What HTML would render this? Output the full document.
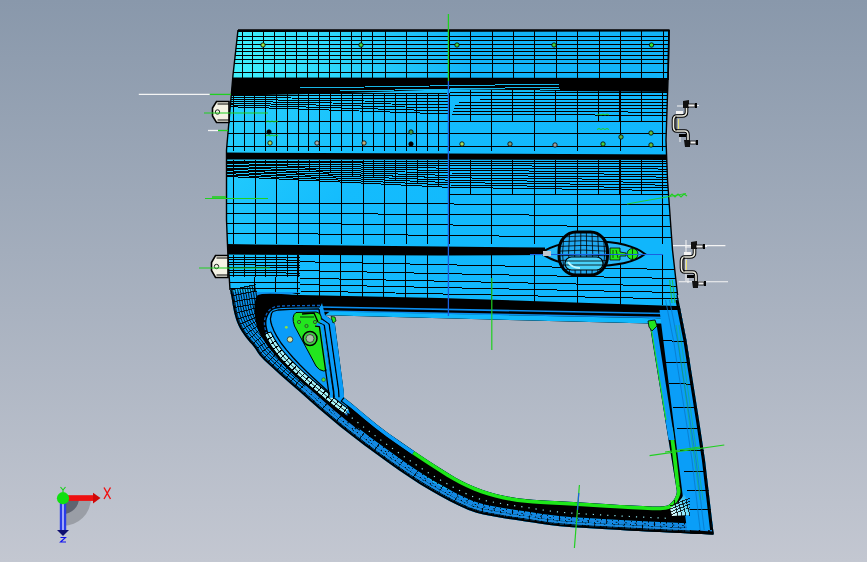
<!DOCTYPE html>
<html><head><meta charset="utf-8"><style>
html,body{margin:0;padding:0;width:867px;height:562px;overflow:hidden;background:#a6afbe}
</style></head><body>
<svg width="867" height="562" viewBox="0 0 867 562" style="display:block">
<defs>
<linearGradient id="bg" x1="0" y1="0" x2="0" y2="562" gradientUnits="userSpaceOnUse">
<stop offset="0" stop-color="#8998ab"/><stop offset="1" stop-color="#c3c7d1"/></linearGradient>
<linearGradient id="door" x1="226" y1="60" x2="520" y2="330" gradientUnits="userSpaceOnUse">
<stop offset="0" stop-color="#2ad4fc"/><stop offset="0.45" stop-color="#14bcfd"/><stop offset="1" stop-color="#10b6fc"/></linearGradient>
<linearGradient id="topp" x1="236" y1="45" x2="470" y2="60" gradientUnits="userSpaceOnUse">
<stop offset="0" stop-color="#40f0fc"/><stop offset="0.45" stop-color="#2cd4fa"/><stop offset="1" stop-color="#12b4f8"/></linearGradient>
<clipPath id="dc"><path d="M238.0,30.0 669.0,30.0 668.0,80.0 666.0,140.0 667.5,180.0 670.0,215.0 672.5,250.0 677.6,295.0 686.4,340.0 699.0,420.0 705.0,460.0 713.5,533.0 713.5,535.0 713.5,534.5 695.9,533.7 670.5,532.5 643.2,531.2 620.0,530.0 602.0,529.0 586.3,528.1 572.4,527.2 560.0,526.2 549.4,525.1 540.7,523.8 533.0,522.6 525.4,521.4 517.9,520.3 510.8,519.3 504.0,518.3 497.0,517.0 490.1,515.7 483.4,514.5 476.4,512.7 468.5,510.0 459.6,506.1 449.9,501.3 439.8,495.8 429.7,490.0 419.6,483.9 409.4,477.3 398.9,470.2 388.0,462.5 376.3,454.0 363.9,444.9 351.6,435.5 340.0,426.4 329.3,417.6 319.2,408.9 309.5,400.4 300.0,392.0 290.1,383.4 280.1,374.7 271.1,366.6 264.0,360.0 259.6,355.3 257.3,352.1 255.8,349.6 254.0,347.0 251.8,344.3 249.6,341.9 247.6,339.5 245.6,337.0 243.7,334.3 241.8,331.4 240.0,328.5 238.5,325.5 237.2,322.5 236.1,319.4 235.1,316.1 234.2,312.7 233.4,308.8 232.6,304.5 232.0,300.4 231.4,297.0 230.9,294.5 230.5,292.5 230.2,291.1 230.0,290.0 228.0,257.0 226.5,220.0 226.5,150.0 233.0,75.0Z M325.0,315.3 333.0,320.5 335.0,324.6 343.6,390.4 344.0,397.6 344.0,397.6 345.1,398.4 346.5,399.6 349.1,401.5 353.4,405.0 359.9,410.4 368.0,417.2 377.5,424.9 388.0,432.9 400.3,441.6 414.4,451.2 428.2,460.4 440.0,468.0 448.8,473.5 455.7,477.7 461.9,481.0 468.5,484.2 475.6,487.3 482.8,489.9 489.9,492.2 497.0,494.2 504.0,495.8 510.8,497.1 517.9,498.2 525.4,499.1 533.0,499.8 540.7,500.3 549.4,500.7 560.0,501.3 573.7,502.1 589.7,503.1 605.8,504.1 620.0,504.9 632.1,505.6 643.1,506.1 652.5,506.5 660.0,506.5 664.9,506.1 667.7,505.4 669.3,504.4 671.0,503.0 672.9,501.1 674.5,498.8 675.7,496.3 676.5,494.0 676.8,491.7 676.6,489.4 676.2,487.4 676.0,486.0 649.5,323.5Z" clip-rule="evenodd"/></clipPath>
</defs>
<rect width="867" height="562" fill="url(#bg)"/>
<path d="M238.0,30.0 669.0,30.0 668.0,80.0 666.0,140.0 667.5,180.0 670.0,215.0 672.5,250.0 677.6,295.0 686.4,340.0 699.0,420.0 705.0,460.0 713.5,533.0 713.5,535.0 713.5,534.5 695.9,533.7 670.5,532.5 643.2,531.2 620.0,530.0 602.0,529.0 586.3,528.1 572.4,527.2 560.0,526.2 549.4,525.1 540.7,523.8 533.0,522.6 525.4,521.4 517.9,520.3 510.8,519.3 504.0,518.3 497.0,517.0 490.1,515.7 483.4,514.5 476.4,512.7 468.5,510.0 459.6,506.1 449.9,501.3 439.8,495.8 429.7,490.0 419.6,483.9 409.4,477.3 398.9,470.2 388.0,462.5 376.3,454.0 363.9,444.9 351.6,435.5 340.0,426.4 329.3,417.6 319.2,408.9 309.5,400.4 300.0,392.0 290.1,383.4 280.1,374.7 271.1,366.6 264.0,360.0 259.6,355.3 257.3,352.1 255.8,349.6 254.0,347.0 251.8,344.3 249.6,341.9 247.6,339.5 245.6,337.0 243.7,334.3 241.8,331.4 240.0,328.5 238.5,325.5 237.2,322.5 236.1,319.4 235.1,316.1 234.2,312.7 233.4,308.8 232.6,304.5 232.0,300.4 231.4,297.0 230.9,294.5 230.5,292.5 230.2,291.1 230.0,290.0 228.0,257.0 226.5,220.0 226.5,150.0 233.0,75.0Z M325.0,315.3 333.0,320.5 335.0,324.6 343.6,390.4 344.0,397.6 344.0,397.6 345.1,398.4 346.5,399.6 349.1,401.5 353.4,405.0 359.9,410.4 368.0,417.2 377.5,424.9 388.0,432.9 400.3,441.6 414.4,451.2 428.2,460.4 440.0,468.0 448.8,473.5 455.7,477.7 461.9,481.0 468.5,484.2 475.6,487.3 482.8,489.9 489.9,492.2 497.0,494.2 504.0,495.8 510.8,497.1 517.9,498.2 525.4,499.1 533.0,499.8 540.7,500.3 549.4,500.7 560.0,501.3 573.7,502.1 589.7,503.1 605.8,504.1 620.0,504.9 632.1,505.6 643.1,506.1 652.5,506.5 660.0,506.5 664.9,506.1 667.7,505.4 669.3,504.4 671.0,503.0 672.9,501.1 674.5,498.8 675.7,496.3 676.5,494.0 676.8,491.7 676.6,489.4 676.2,487.4 676.0,486.0 649.5,323.5Z" fill="url(#door)" fill-rule="evenodd"/>
<g clip-path="url(#dc)">
<polygon points="226.0,25.0 680.0,25.0 680.0,78.0 226.0,78.0" fill="url(#topp)"/><g shape-rendering="crispEdges"><line x1="226.0" y1="36.0" x2="680.0" y2="36.0" stroke="#000" stroke-width="1.0"/><line x1="226.0" y1="40.0" x2="680.0" y2="40.0" stroke="#000" stroke-width="1.0"/><line x1="226.0" y1="44.2" x2="680.0" y2="44.2" stroke="#000" stroke-width="1.0"/><line x1="226.0" y1="48.0" x2="680.0" y2="48.0" stroke="#000" stroke-width="1.0"/><line x1="226.0" y1="51.5" x2="680.0" y2="51.5" stroke="#000" stroke-width="1.0"/><line x1="226.0" y1="55.0" x2="680.0" y2="55.0" stroke="#000" stroke-width="1.0"/><line x1="226.0" y1="59.0" x2="680.0" y2="59.0" stroke="#000" stroke-width="1.0"/><line x1="226.0" y1="63.0" x2="680.0" y2="63.0" stroke="#000" stroke-width="1.0"/><line x1="226.0" y1="72.5" x2="680.0" y2="72.5" stroke="#000" stroke-width="1.0"/><line x1="242.0" y1="30.0" x2="242.0" y2="78.0" stroke="#000" stroke-width="1.0"/><line x1="252.9" y1="30.0" x2="252.9" y2="78.0" stroke="#000" stroke-width="1.0"/><line x1="263.8" y1="30.0" x2="263.8" y2="78.0" stroke="#000" stroke-width="1.0"/><line x1="274.7" y1="30.0" x2="274.7" y2="78.0" stroke="#000" stroke-width="1.0"/><line x1="285.6" y1="30.0" x2="285.6" y2="78.0" stroke="#000" stroke-width="1.0"/><line x1="296.5" y1="30.0" x2="296.5" y2="78.0" stroke="#000" stroke-width="1.0"/><line x1="307.4" y1="30.0" x2="307.4" y2="78.0" stroke="#000" stroke-width="1.0"/><line x1="318.3" y1="30.0" x2="318.3" y2="78.0" stroke="#000" stroke-width="1.0"/><line x1="329.2" y1="30.0" x2="329.2" y2="78.0" stroke="#000" stroke-width="1.0"/><line x1="340.1" y1="30.0" x2="340.1" y2="78.0" stroke="#000" stroke-width="1.0"/><line x1="351.0" y1="30.0" x2="351.0" y2="78.0" stroke="#000" stroke-width="1.0"/><line x1="361.9" y1="30.0" x2="361.9" y2="78.0" stroke="#000" stroke-width="1.0"/><line x1="372.8" y1="30.0" x2="372.8" y2="78.0" stroke="#000" stroke-width="1.0"/><line x1="385.0" y1="30.0" x2="385.0" y2="78.0" stroke="#000" stroke-width="1.0"/><line x1="406.4" y1="30.0" x2="406.4" y2="78.0" stroke="#000" stroke-width="1.0"/><line x1="427.8" y1="30.0" x2="427.8" y2="78.0" stroke="#000" stroke-width="1.0"/><line x1="449.2" y1="30.0" x2="449.2" y2="78.0" stroke="#000" stroke-width="1.0"/><line x1="470.6" y1="30.0" x2="470.6" y2="78.0" stroke="#000" stroke-width="1.0"/><line x1="492.0" y1="30.0" x2="492.0" y2="78.0" stroke="#000" stroke-width="1.0"/><line x1="513.4" y1="30.0" x2="513.4" y2="78.0" stroke="#000" stroke-width="1.0"/><line x1="534.8" y1="30.0" x2="534.8" y2="78.0" stroke="#000" stroke-width="1.0"/><line x1="556.2" y1="30.0" x2="556.2" y2="78.0" stroke="#000" stroke-width="1.0"/><line x1="577.6" y1="30.0" x2="577.6" y2="78.0" stroke="#000" stroke-width="1.0"/><line x1="599.0" y1="30.0" x2="599.0" y2="78.0" stroke="#000" stroke-width="1.0"/><line x1="620.4" y1="30.0" x2="620.4" y2="78.0" stroke="#000" stroke-width="1.0"/><line x1="641.8" y1="30.0" x2="641.8" y2="78.0" stroke="#000" stroke-width="1.0"/><line x1="663.2" y1="30.0" x2="663.2" y2="78.0" stroke="#000" stroke-width="1.0"/></g><polyline points="226.0,31.0 669.0,30.5" fill="none" stroke="#000" stroke-width="2.2" stroke-linejoin="round" /><polygon points="220.0,77.5 680.0,78.0 680.0,92.0 560.0,91.0 450.0,89.0 350.0,93.0 220.0,96.0" fill="#000"/><g shape-rendering="crispEdges"><line x1="300.0" y1="88.0" x2="560.0" y2="84.0" stroke="#18b8e8" stroke-width="1.0"/><line x1="340.0" y1="91.0" x2="560.0" y2="87.0" stroke="#18b8e8" stroke-width="1.0"/><line x1="380.0" y1="94.0" x2="560.0" y2="89.5" stroke="#18b8e8" stroke-width="1.0"/></g><polyline points="226,94.0 450,93.0 680,92.5" fill="none" stroke="#000" stroke-width="1" shape-rendering="crispEdges"/><polyline points="226,95.8 450,96.0 680,95.8" fill="none" stroke="#000" stroke-width="1" shape-rendering="crispEdges"/><polyline points="226,97.6 450,99.0 680,99.1" fill="none" stroke="#000" stroke-width="1" shape-rendering="crispEdges"/><polyline points="226,99.4 450,102.0 680,102.4" fill="none" stroke="#000" stroke-width="1" shape-rendering="crispEdges"/><polyline points="226,101.2 450,105.0 680,105.7" fill="none" stroke="#000" stroke-width="1" shape-rendering="crispEdges"/><polyline points="226,103.0 450,108.0 680,109.0" fill="none" stroke="#000" stroke-width="1" shape-rendering="crispEdges"/><polyline points="226,104.8 450,111.0 680,112.3" fill="none" stroke="#000" stroke-width="1" shape-rendering="crispEdges"/><polyline points="226,106.6 450,114.0 680,115.6" fill="none" stroke="#000" stroke-width="1" shape-rendering="crispEdges"/><polygon points="220.0,152.5 680.0,154.5 680.0,160.0 220.0,159.5" fill="#000"/><g shape-rendering="crispEdges"><line x1="226.0" y1="121.0" x2="680.0" y2="121.0" stroke="#000" stroke-width="1.0"/><line x1="226.0" y1="133.0" x2="680.0" y2="133.0" stroke="#000" stroke-width="1.0"/><line x1="226.0" y1="146.0" x2="680.0" y2="146.0" stroke="#000" stroke-width="1.0"/><line x1="233.3" y1="93.0" x2="233.3" y2="151.0" stroke="#000" stroke-width="1.0"/><line x1="244.1" y1="93.0" x2="244.1" y2="151.0" stroke="#000" stroke-width="1.0"/><line x1="254.9" y1="93.0" x2="254.9" y2="151.0" stroke="#000" stroke-width="1.0"/><line x1="265.7" y1="93.0" x2="265.7" y2="151.0" stroke="#000" stroke-width="1.0"/><line x1="276.5" y1="93.0" x2="276.5" y2="151.0" stroke="#000" stroke-width="1.0"/><line x1="287.3" y1="93.0" x2="287.3" y2="151.0" stroke="#000" stroke-width="1.0"/><line x1="298.1" y1="93.0" x2="298.1" y2="151.0" stroke="#000" stroke-width="1.0"/><line x1="308.9" y1="93.0" x2="308.9" y2="151.0" stroke="#000" stroke-width="1.0"/><line x1="319.7" y1="93.0" x2="319.7" y2="151.0" stroke="#000" stroke-width="1.0"/><line x1="330.5" y1="93.0" x2="330.5" y2="151.0" stroke="#000" stroke-width="1.0"/><line x1="341.3" y1="93.0" x2="341.3" y2="151.0" stroke="#000" stroke-width="1.0"/><line x1="352.1" y1="93.0" x2="352.1" y2="151.0" stroke="#000" stroke-width="1.0"/><line x1="362.9" y1="93.0" x2="362.9" y2="151.0" stroke="#000" stroke-width="1.0"/><line x1="373.7" y1="93.0" x2="373.7" y2="151.0" stroke="#000" stroke-width="1.0"/><line x1="384.5" y1="93.0" x2="384.5" y2="151.0" stroke="#000" stroke-width="1.0"/><line x1="395.3" y1="93.0" x2="395.3" y2="151.0" stroke="#000" stroke-width="1.0"/><line x1="406.1" y1="93.0" x2="406.1" y2="151.0" stroke="#000" stroke-width="1.0"/><line x1="416.9" y1="93.0" x2="416.9" y2="151.0" stroke="#000" stroke-width="1.0"/><line x1="427.7" y1="93.0" x2="427.7" y2="151.0" stroke="#000" stroke-width="1.0"/><line x1="438.5" y1="93.0" x2="438.5" y2="151.0" stroke="#000" stroke-width="1.0"/><line x1="449.3" y1="93.0" x2="449.3" y2="151.0" stroke="#000" stroke-width="1.0"/><line x1="470.0" y1="90.0" x2="470.0" y2="121.0" stroke="#000" stroke-width="1.0"/><line x1="491.4" y1="90.0" x2="491.4" y2="121.0" stroke="#000" stroke-width="1.0"/><line x1="512.8" y1="90.0" x2="512.8" y2="121.0" stroke="#000" stroke-width="1.0"/><line x1="534.2" y1="90.0" x2="534.2" y2="121.0" stroke="#000" stroke-width="1.0"/><line x1="555.6" y1="90.0" x2="555.6" y2="121.0" stroke="#000" stroke-width="1.0"/><line x1="577.0" y1="90.0" x2="577.0" y2="121.0" stroke="#000" stroke-width="1.0"/><line x1="598.4" y1="90.0" x2="598.4" y2="121.0" stroke="#000" stroke-width="1.0"/><line x1="619.8" y1="90.0" x2="619.8" y2="121.0" stroke="#000" stroke-width="1.0"/><line x1="641.2" y1="90.0" x2="641.2" y2="121.0" stroke="#000" stroke-width="1.0"/><line x1="662.6" y1="90.0" x2="662.6" y2="121.0" stroke="#000" stroke-width="1.0"/><line x1="491.7" y1="90.0" x2="491.7" y2="151.0" stroke="#000" stroke-width="1.0"/><line x1="534.5" y1="90.0" x2="534.5" y2="151.0" stroke="#000" stroke-width="1.0"/><line x1="577.3" y1="90.0" x2="577.3" y2="151.0" stroke="#000" stroke-width="1.0"/><line x1="620.1" y1="90.0" x2="620.1" y2="151.0" stroke="#000" stroke-width="1.0"/><line x1="662.9" y1="90.0" x2="662.9" y2="151.0" stroke="#000" stroke-width="1.0"/></g><polyline points="226,161.0 450,161.0 680,161.0" fill="none" stroke="#000" stroke-width="1" shape-rendering="crispEdges"/><polyline points="226,162.4 450,163.4 680,163.7" fill="none" stroke="#000" stroke-width="1" shape-rendering="crispEdges"/><polyline points="226,163.8 450,165.8 680,166.4" fill="none" stroke="#000" stroke-width="1" shape-rendering="crispEdges"/><polyline points="226,165.2 450,168.2 680,169.1" fill="none" stroke="#000" stroke-width="1" shape-rendering="crispEdges"/><polyline points="226,166.6 450,170.6 680,171.8" fill="none" stroke="#000" stroke-width="1" shape-rendering="crispEdges"/><polyline points="226,168.0 450,173.0 680,174.5" fill="none" stroke="#000" stroke-width="1" shape-rendering="crispEdges"/><polyline points="226,169.4 450,175.4 680,177.2" fill="none" stroke="#000" stroke-width="1" shape-rendering="crispEdges"/><polyline points="226,170.8 450,177.8 680,179.9" fill="none" stroke="#000" stroke-width="1" shape-rendering="crispEdges"/><polyline points="226,172.2 450,180.2 680,182.6" fill="none" stroke="#000" stroke-width="1" shape-rendering="crispEdges"/><polyline points="226,173.6 450,182.6 680,185.3" fill="none" stroke="#000" stroke-width="1" shape-rendering="crispEdges"/><polyline points="226,175.0 450,185.0 680,188.0" fill="none" stroke="#000" stroke-width="1" shape-rendering="crispEdges"/><polyline points="226,176.4 450,187.4 680,190.7" fill="none" stroke="#000" stroke-width="1" shape-rendering="crispEdges"/><polygon points="220.0,244.0 440.0,246.5 545.0,247.5 545.0,255.0 440.0,255.5 220.0,254.5" fill="#000"/><g shape-rendering="crispEdges"><line x1="450.0" y1="194.0" x2="680.0" y2="194.0" stroke="#000" stroke-width="1.0"/><line x1="226.0" y1="203.0" x2="680.0" y2="205.0" stroke="#000" stroke-width="1.0"/><line x1="226.0" y1="213.0" x2="680.0" y2="216.0" stroke="#000" stroke-width="1.0"/><line x1="226.0" y1="223.0" x2="680.0" y2="227.0" stroke="#000" stroke-width="1.0"/><line x1="226.0" y1="233.0" x2="680.0" y2="238.0" stroke="#000" stroke-width="1.0"/><line x1="233.4" y1="160.0" x2="233.4" y2="161.9" stroke="#000" stroke-width="1.0"/><line x1="244.2" y1="160.0" x2="244.2" y2="163.1" stroke="#000" stroke-width="1.0"/><line x1="255.0" y1="160.0" x2="255.0" y2="164.4" stroke="#000" stroke-width="1.0"/><line x1="265.8" y1="160.0" x2="265.8" y2="165.6" stroke="#000" stroke-width="1.0"/><line x1="276.6" y1="160.0" x2="276.6" y2="166.9" stroke="#000" stroke-width="1.0"/><line x1="287.4" y1="160.0" x2="287.4" y2="168.1" stroke="#000" stroke-width="1.0"/><line x1="298.2" y1="160.0" x2="298.2" y2="169.4" stroke="#000" stroke-width="1.0"/><line x1="309.0" y1="160.0" x2="309.0" y2="170.6" stroke="#000" stroke-width="1.0"/><line x1="319.8" y1="160.0" x2="319.8" y2="171.9" stroke="#000" stroke-width="1.0"/><line x1="330.6" y1="160.0" x2="330.6" y2="173.1" stroke="#000" stroke-width="1.0"/><line x1="341.4" y1="160.0" x2="341.4" y2="174.4" stroke="#000" stroke-width="1.0"/><line x1="352.2" y1="160.0" x2="352.2" y2="175.6" stroke="#000" stroke-width="1.0"/><line x1="363.0" y1="160.0" x2="363.0" y2="176.9" stroke="#000" stroke-width="1.0"/><line x1="373.8" y1="160.0" x2="373.8" y2="178.2" stroke="#000" stroke-width="1.0"/><line x1="384.6" y1="160.0" x2="384.6" y2="179.4" stroke="#000" stroke-width="1.0"/><line x1="395.4" y1="160.0" x2="395.4" y2="180.7" stroke="#000" stroke-width="1.0"/><line x1="406.2" y1="160.0" x2="406.2" y2="181.9" stroke="#000" stroke-width="1.0"/><line x1="417.0" y1="160.0" x2="417.0" y2="183.2" stroke="#000" stroke-width="1.0"/><line x1="427.8" y1="160.0" x2="427.8" y2="184.4" stroke="#000" stroke-width="1.0"/><line x1="438.6" y1="160.0" x2="438.6" y2="185.7" stroke="#000" stroke-width="1.0"/><line x1="449.4" y1="160.0" x2="449.4" y2="186.9" stroke="#000" stroke-width="1.0"/><line x1="233.4" y1="160.0" x2="233.4" y2="244.0" stroke="#000" stroke-width="1.0"/><line x1="255.0" y1="160.0" x2="255.0" y2="244.0" stroke="#000" stroke-width="1.0"/><line x1="276.6" y1="160.0" x2="276.6" y2="244.0" stroke="#000" stroke-width="1.0"/><line x1="298.2" y1="160.0" x2="298.2" y2="244.0" stroke="#000" stroke-width="1.0"/><line x1="319.8" y1="160.0" x2="319.8" y2="244.0" stroke="#000" stroke-width="1.0"/><line x1="341.4" y1="160.0" x2="341.4" y2="244.0" stroke="#000" stroke-width="1.0"/><line x1="363.0" y1="160.0" x2="363.0" y2="244.0" stroke="#000" stroke-width="1.0"/><line x1="384.6" y1="160.0" x2="384.6" y2="244.0" stroke="#000" stroke-width="1.0"/><line x1="406.2" y1="160.0" x2="406.2" y2="244.0" stroke="#000" stroke-width="1.0"/><line x1="427.8" y1="160.0" x2="427.8" y2="244.0" stroke="#000" stroke-width="1.0"/><line x1="449.4" y1="160.0" x2="449.4" y2="244.0" stroke="#000" stroke-width="1.0"/><line x1="470.0" y1="160.0" x2="470.0" y2="195.0" stroke="#000" stroke-width="1.0"/><line x1="491.4" y1="160.0" x2="491.4" y2="195.0" stroke="#000" stroke-width="1.0"/><line x1="512.8" y1="160.0" x2="512.8" y2="195.0" stroke="#000" stroke-width="1.0"/><line x1="534.2" y1="160.0" x2="534.2" y2="195.0" stroke="#000" stroke-width="1.0"/><line x1="555.6" y1="160.0" x2="555.6" y2="195.0" stroke="#000" stroke-width="1.0"/><line x1="577.0" y1="160.0" x2="577.0" y2="195.0" stroke="#000" stroke-width="1.0"/><line x1="598.4" y1="160.0" x2="598.4" y2="195.0" stroke="#000" stroke-width="1.0"/><line x1="619.8" y1="160.0" x2="619.8" y2="195.0" stroke="#000" stroke-width="1.0"/><line x1="641.2" y1="160.0" x2="641.2" y2="195.0" stroke="#000" stroke-width="1.0"/><line x1="662.6" y1="160.0" x2="662.6" y2="195.0" stroke="#000" stroke-width="1.0"/><line x1="491.7" y1="160.0" x2="491.7" y2="244.0" stroke="#000" stroke-width="1.0"/><line x1="534.5" y1="160.0" x2="534.5" y2="244.0" stroke="#000" stroke-width="1.0"/><line x1="577.3" y1="160.0" x2="577.3" y2="244.0" stroke="#000" stroke-width="1.0"/><line x1="620.1" y1="160.0" x2="620.1" y2="244.0" stroke="#000" stroke-width="1.0"/><line x1="662.9" y1="160.0" x2="662.9" y2="244.0" stroke="#000" stroke-width="1.0"/><line x1="226.0" y1="257.0" x2="300.0" y2="257.5" stroke="#000" stroke-width="1.0"/><line x1="226.0" y1="259.6" x2="300.0" y2="260.1" stroke="#000" stroke-width="1.0"/><line x1="226.0" y1="262.2" x2="300.0" y2="262.7" stroke="#000" stroke-width="1.0"/><line x1="226.0" y1="264.8" x2="300.0" y2="265.3" stroke="#000" stroke-width="1.0"/><line x1="226.0" y1="267.4" x2="300.0" y2="267.9" stroke="#000" stroke-width="1.0"/><line x1="226.0" y1="270.0" x2="300.0" y2="270.5" stroke="#000" stroke-width="1.0"/><line x1="226.0" y1="272.6" x2="300.0" y2="273.1" stroke="#000" stroke-width="1.0"/><line x1="226.0" y1="275.2" x2="300.0" y2="275.7" stroke="#000" stroke-width="1.0"/><line x1="233.4" y1="255.0" x2="233.4" y2="277.0" stroke="#000" stroke-width="1.0"/><line x1="244.2" y1="255.0" x2="244.2" y2="277.0" stroke="#000" stroke-width="1.0"/><line x1="255.0" y1="255.0" x2="255.0" y2="277.0" stroke="#000" stroke-width="1.0"/><line x1="265.8" y1="255.0" x2="265.8" y2="277.0" stroke="#000" stroke-width="1.0"/><line x1="276.6" y1="255.0" x2="276.6" y2="277.0" stroke="#000" stroke-width="1.0"/><line x1="287.4" y1="255.0" x2="287.4" y2="277.0" stroke="#000" stroke-width="1.0"/><line x1="298.2" y1="255.0" x2="298.2" y2="277.0" stroke="#000" stroke-width="1.0"/><line x1="226.0" y1="282.0" x2="300.0" y2="282.0" stroke="#000" stroke-width="1.0"/><line x1="226.0" y1="288.0" x2="300.0" y2="288.0" stroke="#000" stroke-width="1.0"/><line x1="226.0" y1="293.0" x2="300.0" y2="293.0" stroke="#000" stroke-width="1.0"/><line x1="254.8" y1="277.0" x2="254.8" y2="300.0" stroke="#000" stroke-width="1.0"/><line x1="275.5" y1="277.0" x2="275.5" y2="300.0" stroke="#000" stroke-width="1.0"/><line x1="300.0" y1="261.7" x2="680.0" y2="269.7" stroke="#000" stroke-width="1.0"/><line x1="300.0" y1="270.6" x2="680.0" y2="278.6" stroke="#000" stroke-width="1.0"/><line x1="300.0" y1="278.2" x2="680.0" y2="286.2" stroke="#000" stroke-width="1.0"/><line x1="300.0" y1="284.6" x2="680.0" y2="292.6" stroke="#000" stroke-width="1.0"/><line x1="300.0" y1="291.0" x2="680.0" y2="299.0" stroke="#000" stroke-width="1.0"/><line x1="297.4" y1="255.0" x2="297.4" y2="300.0" stroke="#000" stroke-width="1.0"/><line x1="319.0" y1="255.0" x2="319.0" y2="300.0" stroke="#000" stroke-width="1.0"/><line x1="340.6" y1="255.0" x2="340.6" y2="300.0" stroke="#000" stroke-width="1.0"/><line x1="362.2" y1="255.0" x2="362.2" y2="300.0" stroke="#000" stroke-width="1.0"/><line x1="383.8" y1="255.0" x2="383.8" y2="300.0" stroke="#000" stroke-width="1.0"/><line x1="405.4" y1="255.0" x2="405.4" y2="300.0" stroke="#000" stroke-width="1.0"/><line x1="427.0" y1="255.0" x2="427.0" y2="300.0" stroke="#000" stroke-width="1.0"/><line x1="448.6" y1="255.0" x2="448.6" y2="300.0" stroke="#000" stroke-width="1.0"/><line x1="491.7" y1="255.0" x2="491.7" y2="305.0" stroke="#000" stroke-width="1.0"/><line x1="534.5" y1="255.0" x2="534.5" y2="305.0" stroke="#000" stroke-width="1.0"/><line x1="577.3" y1="255.0" x2="577.3" y2="305.0" stroke="#000" stroke-width="1.0"/><line x1="620.1" y1="255.0" x2="620.1" y2="305.0" stroke="#000" stroke-width="1.0"/><line x1="662.9" y1="255.0" x2="662.9" y2="305.0" stroke="#000" stroke-width="1.0"/></g><polygon points="226.0,292.0 300.0,292.0 268.0,300.0 262.0,310.0 262.0,330.0 280.0,355.0 340.0,410.0 440.0,488.0 560.0,515.0 713.0,520.0 714.0,540.0 200.0,560.0" fill="#0a94f0"/><polyline points="232.4,289.5 232.7,290.5 233.0,292.0 233.4,294.0 233.9,296.6 234.4,300.0 235.1,304.1 235.8,308.3 236.6,312.1 237.5,315.5 238.5,318.6 239.5,321.5 240.8,324.4 242.2,327.3 243.9,330.1 245.7,332.9 247.6,335.5 249.5,338.0 251.5,340.3 253.7,342.7 256.0,345.5 257.9,348.2 259.4,350.7 261.5,353.7 265.8,358.2 272.8,364.8 281.8,372.8 291.8,381.5 301.6,390.1 311.2,398.5 320.9,407.1 331.0,415.7 341.6,424.5 353.1,433.5 365.4,442.9 377.7,452.0 389.4,460.5 400.4,468.1 410.8,475.2 421.0,481.7 431.0,487.8 441.1,493.6 451.1,499.1 460.7,503.8 469.4,507.7 477.1,510.3 483.9,512.0 490.6,513.3 497.5,514.5 504.4,515.8 511.2,516.9 518.2,517.9 525.8,518.9 533.4,520.1 541.1,521.4 549.7,522.6 560.2,523.7 572.6,524.7 586.5,525.6 602.2,526.5 620.1,527.5 643.3,528.7 670.6,530.0 696.0,531.2 713.6,532.0" fill="none" stroke="#000" stroke-width="0.9" stroke-linejoin="round" /><polyline points="234.9,289.0 235.1,290.0 235.4,291.5 235.8,293.5 236.3,296.1 236.9,299.6 237.6,303.7 238.3,307.8 239.1,311.5 239.9,314.8 240.8,317.8 241.8,320.6 243.0,323.4 244.4,326.1 246.0,328.8 247.8,331.4 249.6,334.0 251.4,336.4 253.4,338.6 255.5,341.1 258.0,344.0 260.0,346.9 261.4,349.3 263.4,352.1 267.5,356.4 274.4,362.9 283.4,370.9 293.4,379.6 303.3,388.2 312.8,396.6 322.5,405.2 332.6,413.8 343.1,422.5 354.6,431.6 366.9,440.9 379.2,450.0 390.9,458.4 401.8,466.0 412.2,473.1 422.3,479.6 432.2,485.7 442.3,491.5 452.2,496.8 461.7,501.6 470.3,505.4 477.8,507.9 484.5,509.6 491.0,510.8 497.9,512.1 504.8,513.3 511.6,514.4 518.6,515.4 526.1,516.5 533.8,517.7 541.5,518.9 550.0,520.1 560.5,521.2 572.8,522.2 586.6,523.1 602.3,524.0 620.3,525.0 643.5,526.2 670.7,527.5 696.1,528.7 713.7,529.5" fill="none" stroke="#000" stroke-width="0.9" stroke-linejoin="round" /><polyline points="237.3,288.5 237.6,289.5 237.9,291.0 238.3,293.0 238.8,295.7 239.4,299.2 240.0,303.3 240.7,307.4 241.5,311.0 242.3,314.1 243.2,317.0 244.2,319.7 245.3,322.3 246.6,324.9 248.1,327.4 249.9,330.0 251.6,332.5 253.4,334.8 255.3,337.0 257.4,339.4 260.0,342.5 262.1,345.6 263.5,347.9 265.3,350.5 269.3,354.7 276.1,361.1 285.1,369.0 295.0,377.7 304.9,386.4 314.5,394.8 324.2,403.3 334.2,411.9 344.7,420.6 356.2,429.6 368.4,438.9 380.7,448.0 392.3,456.4 403.2,464.0 413.6,471.0 423.6,477.5 433.5,483.5 443.5,489.3 453.4,494.6 462.8,499.3 471.3,503.0 478.5,505.5 485.0,507.1 491.5,508.4 498.4,509.6 505.2,510.9 511.9,511.9 518.9,512.9 526.5,514.0 534.2,515.2 541.8,516.4 550.3,517.6 560.7,518.7 573.0,519.7 586.8,520.6 602.5,521.5 620.4,522.5 643.6,523.7 670.9,525.0 696.3,526.2 713.9,527.0" fill="none" stroke="#000" stroke-width="0.9" stroke-linejoin="round" /><polyline points="239.8,288.0 240.0,289.0 240.3,290.5 240.7,292.6 241.2,295.3 241.8,298.8 242.5,302.8 243.2,306.9 243.9,310.4 244.7,313.4 245.6,316.2 246.5,318.8 247.5,321.2 248.8,323.6 250.3,326.1 251.9,328.6 253.6,331.1 255.3,333.2 257.1,335.3 259.3,337.8 261.9,340.9 264.2,344.2 265.6,346.6 267.2,348.8 271.0,352.9 277.8,359.2 286.7,367.2 296.7,375.9 306.6,384.5" fill="none" stroke="#000" stroke-width="0.9" stroke-linejoin="round" /><polyline points="242.2,287.5 242.5,288.5 242.8,290.0 243.2,292.1 243.7,294.8 244.3,298.4 244.9,302.4 245.6,306.4 246.4,309.8 247.1,312.7 248.0,315.4 248.8,317.9 249.8,320.2 251.0,322.4 252.4,324.8 254.0,327.2 255.6,329.6 257.2,331.6 259.0,333.7 261.2,336.2 263.9,339.4 266.3,342.9 267.7,345.2 269.1,347.2 272.8,351.1 279.5,357.4 288.4,365.3 298.3,374.0 308.2,382.6" fill="none" stroke="#000" stroke-width="0.9" stroke-linejoin="round" /><polyline points="244.7,287.0 244.9,288.0 245.2,289.5 245.6,291.6 246.2,294.4 246.8,298.0 247.4,302.0 248.1,305.9 248.8,309.2 249.5,312.1 250.3,314.7 251.1,317.0 252.1,319.1 253.2,321.2 254.5,323.4 256.1,325.8 257.7,328.1 259.2,330.0 260.9,332.0 263.1,334.5 265.9,337.9 268.4,341.5 269.7,343.8 271.0,345.6 274.5,349.3 281.2,355.5 290.0,363.4 300.0,372.1 309.9,380.7" fill="none" stroke="#000" stroke-width="0.9" stroke-linejoin="round" /><polyline points="247.1,286.4 247.4,287.5 247.7,289.0 248.1,291.1 248.6,293.9 249.2,297.6 249.9,301.6 250.5,305.5 251.2,308.7 251.9,311.4 252.7,313.9 253.5,316.0 254.3,318.0 255.3,320.0 256.6,322.1 258.1,324.4 259.7,326.6 261.1,328.4 262.8,330.4 265.0,332.9 267.9,336.4 270.5,340.2 271.8,342.4 272.9,344.0 276.3,347.5 282.9,353.7 291.7,361.5 301.6,370.2 311.5,378.8" fill="none" stroke="#000" stroke-width="0.9" stroke-linejoin="round" /><polyline points="249.6,285.9 249.8,287.0 250.1,288.5 250.5,290.6 251.1,293.5 251.7,297.2 252.3,301.2 253.0,305.0 253.7,308.1 254.4,310.7 255.1,313.1 255.8,315.1 256.6,317.0 257.5,318.8 258.7,320.8 260.2,323.0 261.7,325.1 263.0,326.9 264.7,328.7 266.9,331.3 269.9,334.9 272.6,338.8 273.9,341.0 274.8,342.4 278.0,345.7 284.5,351.8 293.4,359.7 303.3,368.3 313.1,376.9" fill="none" stroke="#000" stroke-width="0.9" stroke-linejoin="round" /><polyline points="252.0,285.4 252.2,286.5 252.6,288.0 253.0,290.2 253.6,293.1 254.2,296.8 254.8,300.8 255.5,304.5 256.1,307.5 256.8,310.0 257.4,312.3 258.1,314.2 258.8,315.9 259.7,317.6 260.8,319.5 262.3,321.6 263.7,323.6 265.0,325.3 266.6,327.1 268.8,329.7 271.9,333.4 274.7,337.5 276.0,339.6 276.7,340.7 279.8,344.0 286.2,350.0 295.0,357.8 304.9,366.4 314.8,375.0" fill="none" stroke="#000" stroke-width="0.9" stroke-linejoin="round" /><polyline points="254.5,284.9 254.7,286.0 255.0,287.5 255.5,289.7 256.0,292.6 256.6,296.4 257.3,300.4 257.9,304.0 258.5,306.9 259.2,309.3 259.8,311.5 260.5,313.3 261.1,314.8 261.9,316.4 263.0,318.1 264.3,320.2 265.7,322.1 266.9,323.7 268.4,325.5 270.7,328.0 273.9,331.8 276.8,336.1 278.0,338.2 278.6,339.1 281.5,342.2 287.9,348.1 296.7,355.9 306.5,364.5 316.4,373.1" fill="none" stroke="#000" stroke-width="0.9" stroke-linejoin="round" /><g shape-rendering="crispEdges"><line x1="231.0" y1="289.8" x2="255.5" y2="284.7" stroke="#000" stroke-width="0.9"/><line x1="232.2" y1="295.7" x2="256.7" y2="291.0" stroke="#000" stroke-width="0.9"/><line x1="233.2" y1="301.6" x2="257.9" y2="297.7" stroke="#000" stroke-width="0.9"/><line x1="234.2" y1="307.5" x2="258.8" y2="303.3" stroke="#000" stroke-width="0.9"/><line x1="235.4" y1="313.3" x2="259.6" y2="307.0" stroke="#000" stroke-width="0.9"/><line x1="237.0" y1="319.1" x2="261.0" y2="311.8" stroke="#000" stroke-width="0.9"/><line x1="239.2" y1="324.5" x2="262.1" y2="314.7" stroke="#000" stroke-width="0.9"/><line x1="241.9" y1="329.7" x2="263.4" y2="316.9" stroke="#000" stroke-width="0.9"/><line x1="245.2" y1="334.7" x2="265.6" y2="320.3" stroke="#000" stroke-width="0.9"/><line x1="248.7" y1="339.4" x2="267.7" y2="323.0" stroke="#000" stroke-width="0.9"/><line x1="252.7" y1="343.9" x2="271.9" y2="327.8" stroke="#000" stroke-width="0.9"/><line x1="256.4" y1="348.7" x2="277.0" y2="334.6" stroke="#000" stroke-width="0.9"/><line x1="259.7" y1="353.7" x2="279.8" y2="338.9" stroke="#000" stroke-width="0.9"/><line x1="263.6" y1="358.1" x2="281.8" y2="341.0" stroke="#000" stroke-width="0.9"/><line x1="267.8" y1="362.2" x2="284.9" y2="343.9" stroke="#000" stroke-width="0.9"/><line x1="272.2" y1="366.3" x2="288.9" y2="347.6" stroke="#000" stroke-width="0.9"/><line x1="276.7" y1="370.3" x2="293.3" y2="351.6" stroke="#000" stroke-width="0.9"/><line x1="281.2" y1="374.3" x2="297.6" y2="355.4" stroke="#000" stroke-width="0.9"/><line x1="285.7" y1="378.2" x2="302.2" y2="359.4" stroke="#000" stroke-width="0.9"/><line x1="290.2" y1="382.2" x2="296.1" y2="375.4" stroke="#000" stroke-width="0.9"/><line x1="294.7" y1="386.1" x2="300.7" y2="379.3" stroke="#000" stroke-width="0.9"/><line x1="299.3" y1="390.0" x2="305.2" y2="383.3" stroke="#000" stroke-width="0.9"/><line x1="303.8" y1="394.0" x2="309.7" y2="387.2" stroke="#000" stroke-width="0.9"/><line x1="308.3" y1="398.0" x2="314.2" y2="391.2" stroke="#000" stroke-width="0.9"/><line x1="312.8" y1="401.9" x2="318.7" y2="395.2" stroke="#000" stroke-width="0.9"/><line x1="317.3" y1="405.9" x2="323.2" y2="399.1" stroke="#000" stroke-width="0.9"/><line x1="321.8" y1="409.8" x2="327.7" y2="403.0" stroke="#000" stroke-width="0.9"/><line x1="326.4" y1="413.7" x2="332.2" y2="406.9" stroke="#000" stroke-width="0.9"/><line x1="330.9" y1="417.6" x2="336.6" y2="410.7" stroke="#000" stroke-width="0.9"/><line x1="335.5" y1="421.4" x2="341.3" y2="414.5" stroke="#000" stroke-width="0.9"/><line x1="340.2" y1="425.2" x2="345.9" y2="418.3" stroke="#000" stroke-width="0.9"/><line x1="344.9" y1="428.9" x2="350.4" y2="421.9" stroke="#000" stroke-width="0.9"/><line x1="349.6" y1="432.7" x2="355.1" y2="425.6" stroke="#000" stroke-width="0.9"/><line x1="354.3" y1="436.3" x2="359.8" y2="429.2" stroke="#000" stroke-width="0.9"/><line x1="359.1" y1="440.0" x2="364.5" y2="432.8" stroke="#000" stroke-width="0.9"/><line x1="363.9" y1="443.6" x2="369.3" y2="436.4" stroke="#000" stroke-width="0.9"/><line x1="368.7" y1="447.2" x2="374.0" y2="439.9" stroke="#000" stroke-width="0.9"/><line x1="373.5" y1="450.7" x2="378.8" y2="443.5" stroke="#000" stroke-width="0.9"/><line x1="378.3" y1="454.3" x2="383.6" y2="447.0" stroke="#000" stroke-width="0.9"/><line x1="383.2" y1="457.8" x2="388.4" y2="450.5" stroke="#000" stroke-width="0.9"/><line x1="388.0" y1="461.3" x2="393.3" y2="454.0" stroke="#000" stroke-width="0.9"/><line x1="392.9" y1="464.7" x2="398.1" y2="457.4" stroke="#000" stroke-width="0.9"/><line x1="397.9" y1="468.2" x2="403.0" y2="460.8" stroke="#000" stroke-width="0.9"/><line x1="402.8" y1="471.6" x2="407.8" y2="464.1" stroke="#000" stroke-width="0.9"/><line x1="407.8" y1="474.9" x2="412.8" y2="467.5" stroke="#000" stroke-width="0.9"/><line x1="412.8" y1="478.2" x2="417.6" y2="470.7" stroke="#000" stroke-width="0.9"/><line x1="417.8" y1="481.5" x2="422.7" y2="473.9" stroke="#000" stroke-width="0.9"/><line x1="422.8" y1="484.6" x2="427.5" y2="477.0" stroke="#000" stroke-width="0.9"/><line x1="428.0" y1="487.8" x2="432.7" y2="480.1" stroke="#000" stroke-width="0.9"/><line x1="433.1" y1="490.8" x2="437.6" y2="483.0" stroke="#000" stroke-width="0.9"/><line x1="438.3" y1="493.8" x2="442.8" y2="486.0" stroke="#000" stroke-width="0.9"/><line x1="443.5" y1="496.7" x2="447.8" y2="488.8" stroke="#000" stroke-width="0.9"/><line x1="448.8" y1="499.5" x2="453.1" y2="491.6" stroke="#000" stroke-width="0.9"/><line x1="454.1" y1="502.3" x2="458.1" y2="494.2" stroke="#000" stroke-width="0.9"/><line x1="459.5" y1="504.9" x2="463.5" y2="496.9" stroke="#000" stroke-width="0.9"/><line x1="464.9" y1="507.3" x2="468.6" y2="499.1" stroke="#000" stroke-width="0.9"/><line x1="470.4" y1="509.6" x2="473.4" y2="501.1" stroke="#000" stroke-width="0.9"/><line x1="476.1" y1="511.6" x2="479.0" y2="503.1" stroke="#000" stroke-width="0.9"/><line x1="481.8" y1="513.0" x2="484.0" y2="504.3" stroke="#000" stroke-width="0.9"/><line x1="487.6" y1="514.2" x2="489.3" y2="505.4" stroke="#000" stroke-width="0.9"/><line x1="493.5" y1="515.3" x2="495.1" y2="506.5" stroke="#000" stroke-width="0.9"/><line x1="499.4" y1="516.4" x2="501.0" y2="507.6" stroke="#000" stroke-width="0.9"/><line x1="505.3" y1="517.5" x2="506.7" y2="508.6" stroke="#000" stroke-width="0.9"/><line x1="511.2" y1="518.4" x2="512.5" y2="509.5" stroke="#000" stroke-width="0.9"/><line x1="517.2" y1="519.2" x2="518.4" y2="510.3" stroke="#000" stroke-width="0.9"/><line x1="523.1" y1="520.1" x2="524.4" y2="511.2" stroke="#000" stroke-width="0.9"/><line x1="529.0" y1="521.0" x2="530.4" y2="512.1" stroke="#000" stroke-width="0.9"/><line x1="535.0" y1="521.9" x2="536.4" y2="513.0" stroke="#000" stroke-width="0.9"/><line x1="540.9" y1="522.8" x2="542.1" y2="513.9" stroke="#000" stroke-width="0.9"/><line x1="546.8" y1="523.7" x2="548.1" y2="514.8" stroke="#000" stroke-width="0.9"/><line x1="552.7" y1="524.4" x2="553.7" y2="515.5" stroke="#000" stroke-width="0.9"/><line x1="558.7" y1="525.1" x2="559.7" y2="516.1" stroke="#000" stroke-width="0.9"/><line x1="564.7" y1="525.6" x2="565.4" y2="516.6" stroke="#000" stroke-width="0.9"/><line x1="570.6" y1="526.1" x2="571.4" y2="517.1" stroke="#000" stroke-width="0.9"/><line x1="576.6" y1="526.5" x2="577.2" y2="517.5" stroke="#000" stroke-width="0.9"/><line x1="582.6" y1="526.9" x2="583.2" y2="517.9" stroke="#000" stroke-width="0.9"/><line x1="588.6" y1="527.2" x2="589.1" y2="518.3" stroke="#000" stroke-width="0.9"/><line x1="594.6" y1="527.6" x2="595.1" y2="518.6" stroke="#000" stroke-width="0.9"/><line x1="600.6" y1="527.9" x2="601.1" y2="519.0" stroke="#000" stroke-width="0.9"/><line x1="606.5" y1="528.3" x2="607.0" y2="519.3" stroke="#000" stroke-width="0.9"/><line x1="612.5" y1="528.6" x2="613.0" y2="519.6" stroke="#000" stroke-width="0.9"/><line x1="618.5" y1="528.9" x2="619.0" y2="519.9" stroke="#000" stroke-width="0.9"/><line x1="624.5" y1="529.2" x2="625.0" y2="520.2" stroke="#000" stroke-width="0.9"/><line x1="630.5" y1="529.5" x2="631.0" y2="520.5" stroke="#000" stroke-width="0.9"/><line x1="636.5" y1="529.8" x2="637.0" y2="520.8" stroke="#000" stroke-width="0.9"/><line x1="642.5" y1="530.1" x2="642.9" y2="521.2" stroke="#000" stroke-width="0.9"/><line x1="648.5" y1="530.4" x2="648.9" y2="521.4" stroke="#000" stroke-width="0.9"/><line x1="654.5" y1="530.7" x2="654.9" y2="521.7" stroke="#000" stroke-width="0.9"/><line x1="660.5" y1="531.0" x2="660.9" y2="522.0" stroke="#000" stroke-width="0.9"/><line x1="666.5" y1="531.3" x2="666.9" y2="522.3" stroke="#000" stroke-width="0.9"/><line x1="672.5" y1="531.6" x2="672.9" y2="522.6" stroke="#000" stroke-width="0.9"/><line x1="678.4" y1="531.9" x2="678.9" y2="522.9" stroke="#000" stroke-width="0.9"/><line x1="684.4" y1="532.1" x2="684.9" y2="523.1" stroke="#000" stroke-width="0.9"/><line x1="690.4" y1="532.4" x2="690.9" y2="523.4" stroke="#000" stroke-width="0.9"/><line x1="696.4" y1="532.7" x2="696.8" y2="523.7" stroke="#000" stroke-width="0.9"/><line x1="702.4" y1="533.0" x2="702.8" y2="524.0" stroke="#000" stroke-width="0.9"/><line x1="708.4" y1="533.3" x2="708.8" y2="524.3" stroke="#000" stroke-width="0.9"/></g><polygon points="690.0,306.5 560.0,302.0 440.0,298.0 300.0,295.0 292.4,294.7 281.4,294.1 270.2,293.8 262.0,294.0 258.0,294.9 256.4,296.3 256.0,298.1 255.5,300.0 254.8,302.2 254.5,304.8 254.5,307.4 254.5,310.0 254.6,312.5 254.8,314.9 255.1,317.4 255.5,320.0 256.0,322.6 256.5,325.2 257.3,328.0 258.5,331.0 260.1,334.2 262.1,337.6 264.4,341.2 267.0,345.0 270.0,349.0 273.4,353.3 277.1,357.6 281.0,362.0 285.1,366.4 289.5,370.8 294.0,375.2 298.7,379.6 303.5,384.0 308.6,388.3 313.7,392.6 318.7,397.0 323.6,401.3 328.4,405.6 333.4,410.0 338.6,414.5 344.8,419.7 351.5,425.3 357.7,430.4 362.0,434.0 357.6,427.6 369.9,436.9 382.2,446.0 393.8,454.3 404.6,461.9 414.9,468.9 424.9,475.4 434.8,481.4 444.7,487.1 454.5,492.4 463.8,497.0 472.2,500.7 479.2,503.1 485.5,504.7 491.9,505.9 498.8,507.2 505.6,508.4 512.3,509.4 519.3,510.4 526.9,511.5 534.6,512.7 542.2,513.9 550.6,515.1 560.9,516.2 573.2,517.2 586.9,518.1 602.6,519.0 620.5,520.0 643.7,521.2 671.0,522.5 696.4,523.7 714.0,524.5 714.0,540.0 690.0,540.0" fill="#000"/><polyline points="230.0,290.0 230.2,291.1 230.5,292.5 230.9,294.5 231.4,297.0 232.0,300.4 232.6,304.5 233.4,308.8 234.2,312.7 235.1,316.1 236.1,319.4 237.2,322.5 238.5,325.5 240.0,328.5 241.8,331.4 243.7,334.3 245.6,337.0 247.6,339.5 249.6,341.9 251.8,344.3 254.0,347.0 255.8,349.6 257.3,352.1 259.6,355.3 264.0,360.0 271.1,366.6 280.1,374.7 290.1,383.4 300.0,392.0 309.5,400.4 319.2,408.9 329.3,417.6 340.0,426.4 351.6,435.5 363.9,444.9 376.3,454.0 388.0,462.5 398.9,470.2 409.4,477.3 419.6,483.9 429.7,490.0 439.8,495.8 449.9,501.3 459.6,506.1 468.5,510.0 476.4,512.7 483.4,514.5 490.1,515.7 497.0,517.0 504.0,518.3 510.8,519.3 517.9,520.3 525.4,521.4 533.0,522.6 540.7,523.8 549.4,525.1 560.0,526.2 572.4,527.2 586.3,528.1 602.0,529.0 620.0,530.0 643.2,531.2 670.5,532.5 695.9,533.7 713.5,534.5" fill="none" stroke="#000" stroke-width="4" stroke-linejoin="round" /><polyline points="302.8,388.8 312.3,397.2 322.0,405.8 332.0,414.4 342.6,423.1 354.2,432.2 366.4,441.5 378.7,450.6 390.4,459.1 401.3,466.7 411.7,473.8 421.9,480.3 431.8,486.4 441.9,492.2 451.9,497.6 461.4,502.3 470.0,506.1 477.6,508.7 484.3,510.4 490.9,511.6 497.8,512.9 504.7,514.1 511.4,515.2 518.5,516.2 526.0,517.2 533.7,518.4 541.3,519.7 549.9,520.9 560.4,522.0 572.7,523.0 586.6,523.9 602.3,524.8 620.2,525.8 643.4,527.0 670.7,528.3 696.1,529.5 713.7,530.3" fill="none" stroke="#1a8ae0" stroke-width="2.2" stroke-linejoin="round" stroke-dasharray="8 1.5"/><polyline points="305.0,386.3 314.6,394.7 324.2,403.2 334.2,411.8 344.8,420.5 356.2,429.5 368.5,438.8 380.7,447.9 392.4,456.3 403.2,463.9 413.6,470.9 423.7,477.4 433.6,483.5 443.5,489.2 453.4,494.5 462.8,499.2 471.3,502.9 478.5,505.4 485.0,507.1 491.5,508.3 498.4,509.5 505.2,510.8 511.9,511.8 518.9,512.8 526.5,513.9 534.2,515.1 541.9,516.3 550.3,517.5 560.7,518.6 573.0,519.6 586.8,520.5 602.5,521.4 620.4,522.4 643.6,523.6 670.9,524.9 696.3,526.1 713.9,526.9" fill="none" stroke="#1a84dc" stroke-width="2.2" stroke-linejoin="round" stroke-dasharray="8 1.5"/><polyline points="318.8,389.9 328.4,398.4 338.4,406.9 348.8,415.5 360.2,424.4 372.3,433.7 384.5,442.7 396.1,451.1 406.9,458.6 417.2,465.6 427.1,472.0 436.8,478.0 446.7,483.6 456.4,488.9 465.5,493.4 473.7,497.0 480.4,499.3 486.4,500.8 492.7,502.0 499.5,503.2 506.3,504.5 512.9,505.5 519.8,506.5 527.5,507.6 535.2,508.8 542.8,510.0 551.1,511.2 561.3,512.3 573.4,513.2 587.2,514.1 602.8,515.0 620.7,516.0 643.9,517.2 671.2,518.5" fill="none" stroke="#90e8f0" stroke-width="1.2" stroke-linejoin="round" stroke-dasharray="1.2 6"/><polyline points="320.0,307.0 690.0,314.0" fill="none" stroke="#0a8ef0" stroke-width="1.6" stroke-linejoin="round" /><polyline points="322.0,311.0 690.0,318.0" fill="none" stroke="#0a8ef0" stroke-width="1.6" stroke-linejoin="round" /><polygon points="325.0,315.3 649.5,323.5 690.0,323.5 690.0,319.0 330.0,311.5" fill="#10b8fc"/><g shape-rendering="crispEdges"></g><polygon points="320.0,307.5 312.5,307.5 301.6,307.6 290.4,307.7 282.0,308.0 277.4,308.4 274.9,308.9 273.5,309.5 272.0,310.5 270.4,311.8 269.2,313.4 268.2,315.2 267.5,317.0 266.9,318.8 266.5,320.7 266.4,322.7 266.5,325.0 267.0,327.7 267.7,330.7 268.7,333.8 270.0,337.0 271.6,340.2 273.5,343.4 275.6,346.7 278.0,350.0 280.6,353.4 283.5,356.9 286.6,360.4 290.0,364.0 293.6,367.7 297.6,371.4 301.7,375.2 306.0,379.0 310.6,383.0 315.4,387.0 320.2,391.0 325.0,395.0 329.8,399.1 334.8,403.2 339.3,407.0 343.0,410.0 345.7,411.9 347.6,412.9 349.0,413.5 350.0,414.0 344.0,397.6 343.6,390.4 335.0,324.6 333.0,320.5 325.0,315.3 322.0,303.0" fill="#0a9cf8"/><polyline points="320.0,305.5 312.5,305.5 301.6,305.6 290.4,305.7 281.9,306.0 277.2,306.4 274.3,307.0 272.5,307.8 270.8,308.9 269.0,310.4 267.5,312.3 266.4,314.3 265.6,316.3 265.0,318.3 264.5,320.4 264.4,322.7 264.5,325.2 265.0,328.1 265.8,331.2 266.8,334.5 268.2,337.8 269.8,341.1 271.8,344.4 274.0,347.8 276.4,351.2 279.1,354.7 282.0,358.2 285.1,361.8 288.6,365.4 292.3,369.1 296.2,372.8 300.4,376.6 304.7,380.5 309.3,384.5 314.1,388.5 319.0,392.6 323.7,396.5 328.5,400.6 333.5,404.8 338.0,408.6 341.8,411.6 344.6,413.6 346.7,414.7 348.2,415.4 349.2,415.8" fill="none" stroke="#0a60c0" stroke-width="1.3" stroke-linejoin="round" stroke-dasharray="3 2"/><polyline points="267.6,333.2 269.1,335.9 271.3,339.8 273.8,344.2 276.6,348.3 279.5,352.1 282.7,355.8 286.1,359.6 289.6,363.3 293.4,367.1 297.3,370.8 301.4,374.6 305.7,378.4 310.3,382.4 315.2,386.5 320.1,390.6 324.7,394.4 329.1,398.1 333.5,401.6 337.5,404.8 340.7,407.4 343.1,409.1 344.7,410.2 345.9,410.9 346.7,411.4" fill="none" stroke="#a8f6fc" stroke-width="6" stroke-linejoin="round" /><polyline points="267.6,333.2 269.1,335.9 271.3,339.8 273.8,344.2 276.6,348.3 279.5,352.1 282.7,355.8 286.1,359.6 289.6,363.3 293.4,367.1 297.3,370.8 301.4,374.6 305.7,378.4 310.3,382.4 315.2,386.5 320.1,390.6 324.7,394.4 329.1,398.1 333.5,401.6 337.5,404.8 340.7,407.4 343.1,409.1 344.7,410.2 345.9,410.9 346.7,411.4" fill="none" stroke="#000" stroke-width="0.9" stroke-linejoin="round" /><polyline points="270.4,331.6 272.0,334.3 274.1,338.2 276.6,342.4 279.3,346.4 282.1,350.0 285.2,353.7 288.5,357.3 292.0,361.0 295.7,364.7 299.5,368.4 303.6,372.1 307.8,375.9 312.4,379.9 317.3,384.0 322.2,388.0 326.8,391.8 331.2,395.5 335.6,399.1 339.5,402.3 342.7,404.8 345.0,406.4 346.5,407.4 347.6,408.1 348.4,408.6" fill="none" stroke="#000" stroke-width="1.1" stroke-linejoin="round" /><polyline points="264.7,334.9 266.2,337.6 268.4,341.5 271.0,345.9 273.9,350.2 276.9,354.1 280.2,358.0 283.7,361.8 287.3,365.6 291.1,369.4 295.0,373.2 299.2,377.0 303.5,380.9 308.1,384.9 313.1,389.0 318.0,393.1 322.6,396.9 327.0,400.6 331.4,404.2 335.4,407.4 338.7,410.0 341.2,411.8 343.0,413.0 344.2,413.8 345.0,414.3" fill="none" stroke="#000" stroke-width="1.1" stroke-linejoin="round" /><g shape-rendering="crispEdges"><line x1="265.0" y1="334.7" x2="270.2" y2="331.8" stroke="#000" stroke-width="1.0"/><line x1="267.6" y1="339.5" x2="272.9" y2="336.6" stroke="#000" stroke-width="1.0"/><line x1="270.4" y1="344.3" x2="275.6" y2="341.3" stroke="#000" stroke-width="1.0"/><line x1="273.5" y1="349.1" x2="278.5" y2="345.8" stroke="#000" stroke-width="1.0"/><line x1="277.0" y1="353.7" x2="281.7" y2="350.0" stroke="#000" stroke-width="1.0"/><line x1="280.7" y1="358.1" x2="285.2" y2="354.1" stroke="#000" stroke-width="1.0"/><line x1="284.5" y1="362.2" x2="288.8" y2="358.1" stroke="#000" stroke-width="1.0"/><line x1="288.3" y1="366.3" x2="292.6" y2="362.0" stroke="#000" stroke-width="1.0"/><line x1="292.3" y1="370.2" x2="296.4" y2="365.9" stroke="#000" stroke-width="1.0"/><line x1="296.4" y1="374.0" x2="300.4" y2="369.6" stroke="#000" stroke-width="1.0"/><line x1="300.5" y1="377.7" x2="304.5" y2="373.3" stroke="#000" stroke-width="1.0"/><line x1="304.6" y1="381.4" x2="308.5" y2="376.9" stroke="#000" stroke-width="1.0"/><line x1="308.8" y1="385.1" x2="312.7" y2="380.5" stroke="#000" stroke-width="1.0"/><line x1="313.0" y1="388.6" x2="316.9" y2="384.0" stroke="#000" stroke-width="1.0"/><line x1="317.3" y1="392.1" x2="321.1" y2="387.5" stroke="#000" stroke-width="1.0"/><line x1="321.5" y1="395.6" x2="325.3" y2="391.0" stroke="#000" stroke-width="1.0"/><line x1="325.7" y1="399.2" x2="329.6" y2="394.5" stroke="#000" stroke-width="1.0"/><line x1="330.0" y1="402.7" x2="333.8" y2="398.0" stroke="#000" stroke-width="1.0"/><line x1="334.3" y1="406.1" x2="338.1" y2="401.5" stroke="#000" stroke-width="1.0"/><line x1="338.6" y1="409.6" x2="342.3" y2="404.9" stroke="#000" stroke-width="1.0"/><line x1="343.5" y1="413.0" x2="346.6" y2="407.8" stroke="#000" stroke-width="1.0"/></g><polyline points="319.0,309.0 307.1,309.1 290.7,309.3 278.0,310.0 272.9,311.5 271.5,313.5 271.0,316.0 270.4,318.8 270.8,322.0 272.0,326.0 274.0,331.0 277.0,336.7 281.0,343.0 286.6,350.1 293.2,357.7 300.0,365.0 306.8,371.8 313.7,378.2 320.0,384.0 325.6,389.3 330.6,393.9 334.0,397.0" fill="none" stroke="#000" stroke-width="1.3" stroke-linejoin="round" /><polyline points="319.0,309.0 334.0,397.0" fill="none" stroke="#000" stroke-width="1.3" stroke-linejoin="round" /><path d="M296,312.5 L316,312 Q320,312.5 321,316 L328,364 Q329,371 323.5,371 Q319,370.5 316,366 L294.5,326 Q291,316 296,312.5 Z" fill="#22e61e" stroke="#000" stroke-width="1"/><path d="M302,314 L314,313 L318,322" fill="none" stroke="#000" stroke-width="1.3"/><path d="M300,317 L314,317" fill="none" stroke="#000" stroke-width="0.8"/><circle cx="310" cy="338.5" r="7" fill="#40d040" stroke="#000" stroke-width="1.5"/><circle cx="310" cy="338.5" r="4" fill="#a8c0a8" stroke="#333" stroke-width="0.8"/><circle cx="299" cy="322" r="1.6" fill="none" stroke="#333" stroke-width="0.8"/><circle cx="306.5" cy="326" r="1.6" fill="none" stroke="#333" stroke-width="0.8"/><circle cx="315" cy="322" r="1.6" fill="none" stroke="#333" stroke-width="0.8"/><circle cx="290" cy="339.5" r="2.8" fill="#d8e8a0" stroke="#333" stroke-width="0.8"/><circle cx="286.3" cy="327.3" r="1.4" fill="#90e040"/><circle cx="323.6" cy="379.7" r="1.9" fill="#50e030" stroke="#333" stroke-width="0.5"/><polyline points="323.7,316.5 332.1,323.5 341.6,390.3 342.0,397.1" fill="none" stroke="#0a9cf8" stroke-width="4" stroke-linejoin="round" /><polyline points="321.7,318.7 329.1,324.2 338.6,390.7 339.0,397.3" fill="none" stroke="#000" stroke-width="1.3" stroke-linejoin="round" /><polyline points="320.0,320.6 326.7,324.8 336.2,391.0 336.5,397.4" fill="none" stroke="#0a9cf8" stroke-width="3" stroke-linejoin="round" /><polyline points="318.4,322.5 324.3,325.4 333.7,391.3 334.0,397.6" fill="none" stroke="#000" stroke-width="1.3" stroke-linejoin="round" /><polyline points="316.7,324.3 321.9,326.0 331.2,391.7 331.5,397.7" fill="none" stroke="#0a9cf8" stroke-width="3" stroke-linejoin="round" /><polyline points="315.0,326.2 319.4,326.6 328.7,392.0 329.0,397.9" fill="none" stroke="#000" stroke-width="1.3" stroke-linejoin="round" /><polyline points="344.0,397.6 342.8,399.2 343.9,400.0 345.3,401.1 347.8,403.1 352.1,406.5 358.6,411.9 366.8,418.8 376.3,426.5 386.8,434.5 399.2,443.3 413.3,452.8" fill="none" stroke="#0a9cf8" stroke-width="4" stroke-linejoin="round" /><polyline points="344.0,397.6 341.2,401.2 342.4,402.0 343.8,403.1 346.3,405.1 350.6,408.5 357.0,413.8 365.2,420.7 374.8,428.5 385.3,436.5 397.8,445.3 411.8,454.9" fill="none" stroke="#000" stroke-width="1.2" stroke-linejoin="round" /><polyline points="413.4,452.7 427.3,461.9 439.0,469.5 447.8,475.1 454.8,479.2 461.1,482.6 467.8,485.8 475.0,488.9 482.2,491.6 489.4,493.9 496.5,495.9 503.6,497.6 510.5,498.9 517.6,500.0 525.2,500.9 532.9,501.6 540.6,502.1 549.3,502.5 559.9,503.1 573.6,503.9 589.6,504.9 605.7,505.9 619.9,506.7 632.0,507.4 643.0,507.9 652.5,508.3 660.1,508.3 665.2,507.9 668.3,507.1 670.4,505.8 672.2,504.3 674.3,502.3 676.0,499.7 677.3,497.0 678.2,494.4 678.6,491.8 678.4,489.2 678.0,487.1 677.8,485.8 674.3,454.8 670.8,427.8" fill="none" stroke="#1ee61a" stroke-width="3.8" stroke-linejoin="round" /><polygon points="659.5,310.0 684.5,310.0 686.5,320.0 688.4,330.0 690.4,340.0 692.0,350.0 693.5,360.0 695.1,370.0 696.7,380.0 698.3,390.0 699.9,400.0 701.4,410.0 703.0,420.0 704.5,430.0 706.0,440.0 707.5,450.0 709.0,460.0 710.2,470.0 711.3,480.0 712.5,490.0 713.7,500.0 714.8,510.0 716.0,520.0 717.2,530.0 687.0,530.0" fill="#0a9ef8"/><polygon points="649.5,318.0 655.5,318.0 674.5,440.0 668.5,440.0" fill="#0a9cf8"/><g shape-rendering="crispEdges"><line x1="662.3" y1="340.6" x2="686.5" y2="341.6" stroke="#000" stroke-width="1.0"/><line x1="665.8" y1="362.0" x2="689.9" y2="363.0" stroke="#000" stroke-width="1.0"/><line x1="669.2" y1="383.3" x2="693.2" y2="384.3" stroke="#000" stroke-width="1.0"/><line x1="673.1" y1="407.0" x2="697.0" y2="408.0" stroke="#000" stroke-width="1.0"/><line x1="676.5" y1="428.0" x2="700.2" y2="429.0" stroke="#000" stroke-width="1.0"/><line x1="680.1" y1="450.0" x2="703.5" y2="451.0" stroke="#000" stroke-width="1.0"/><line x1="683.5" y1="471.0" x2="706.3" y2="472.0" stroke="#000" stroke-width="1.0"/><line x1="686.6" y1="490.0" x2="708.5" y2="491.0" stroke="#000" stroke-width="1.0"/><line x1="687.0" y1="509.0" x2="710.7" y2="510.0" stroke="#000" stroke-width="1.0"/></g><polyline points="669.6,300.0 671.5,310.0 673.5,320.0 675.4,330.0 677.4,340.0 679.0,350.0 680.5,360.0 682.1,370.0 683.7,380.0 685.3,390.0 686.9,400.0 688.4,410.0 690.0,420.0 691.5,430.0 693.0,440.0 694.5,450.0 696.0,460.0 697.2,470.0 698.3,480.0 699.5,490.0 700.7,500.0 701.8,510.0 703.0,520.0 704.2,530.0" fill="none" stroke="#0a78c8" stroke-width="0.8" stroke-linejoin="round" /><polyline points="665.6,300.0 667.5,310.0 669.5,320.0 671.4,330.0 673.4,340.0 675.0,350.0 676.5,360.0 678.1,370.0 679.7,380.0 681.3,390.0 682.9,400.0 684.4,410.0 686.0,420.0 687.5,430.0 689.0,440.0 690.5,450.0 692.0,460.0 693.2,470.0 694.3,480.0 695.5,490.0 696.7,500.0 697.8,510.0 699.0,520.0 700.2,530.0" fill="none" stroke="#0a78c8" stroke-width="0.8" stroke-linejoin="round" /><polyline points="676.6,300.0 678.5,310.0 680.5,320.0 682.4,330.0 684.4,340.0 686.0,350.0 687.5,360.0 689.1,370.0 690.7,380.0 692.3,390.0 693.9,400.0 695.4,410.0 697.0,420.0 698.5,430.0 700.0,440.0 701.5,450.0 703.0,460.0 704.2,470.0 705.3,480.0 706.5,490.0 707.7,500.0 708.8,510.0 710.0,520.0 711.2,530.0" fill="none" stroke="#000" stroke-width="2.2" stroke-linejoin="round" /><polyline points="651.4,330.0 666.0,420.0" fill="none" stroke="#20e020" stroke-width="1.2" stroke-linejoin="round" /><defs><linearGradient id="lp" x1="672" y1="514" x2="690" y2="498" gradientUnits="userSpaceOnUse"><stop offset="0" stop-color="#e0ffff"/><stop offset="0.6" stop-color="#60d8f8"/><stop offset="1" stop-color="#10a0f0"/></linearGradient></defs><path d="M670,508 Q680,503 684,494 L689,503 L690,515 L672,516 Z" fill="url(#lp)"/><g shape-rendering="crispEdges"><line x1="674.0" y1="500.0" x2="678.0" y2="516.0" stroke="#000" stroke-width="0.8"/><line x1="670.0" y1="506.0" x2="690.0" y2="498.0" stroke="#000" stroke-width="0.8"/><line x1="678.0" y1="500.0" x2="682.0" y2="516.0" stroke="#000" stroke-width="0.8"/><line x1="670.0" y1="509.0" x2="690.0" y2="501.0" stroke="#000" stroke-width="0.8"/><line x1="682.0" y1="500.0" x2="686.0" y2="516.0" stroke="#000" stroke-width="0.8"/><line x1="670.0" y1="512.0" x2="690.0" y2="504.0" stroke="#000" stroke-width="0.8"/><line x1="686.0" y1="500.0" x2="690.0" y2="516.0" stroke="#000" stroke-width="0.8"/><line x1="670.0" y1="515.0" x2="690.0" y2="507.0" stroke="#000" stroke-width="0.8"/></g><polyline points="677.6,295.0 686.4,340.0 699.0,420.0 705.0,460.0 713.5,533.0 713.0,535.0 620.0,530.0" fill="none" stroke="#000" stroke-width="2.5" stroke-linejoin="round" /></g><polyline points="238.0,30.0 669.0,30.0 668.0,80.0" fill="none" stroke="#000" stroke-width="1.6" stroke-linejoin="round" /><polyline points="238.0,30.0 233.0,75.0 226.5,150.0 226.5,220.0 228.0,257.0 230.0,290.0" fill="none" stroke="#000" stroke-width="1.4" stroke-linejoin="round" /><polyline points="669.0,30.0 668.0,80.0 666.0,140.0 667.5,180.0 670.0,215.0 672.5,250.0 677.6,295.0" fill="none" stroke="#000" stroke-width="1.4" stroke-linejoin="round" /><circle cx="263" cy="45" r="2.2" fill="#90e040" stroke="#000" stroke-width="0.8"/><circle cx="361" cy="45" r="2.2" fill="#40d040" stroke="#000" stroke-width="0.8"/><circle cx="457" cy="45" r="2.2" fill="#40d040" stroke="#000" stroke-width="0.8"/><circle cx="651.5" cy="45" r="2.2" fill="#30e030" stroke="#000" stroke-width="0.8"/><circle cx="269" cy="132" r="2.2" fill="#000" stroke="#000" stroke-width="0.8"/><circle cx="270" cy="143" r="2.2" fill="#a0e060" stroke="#000" stroke-width="0.8"/><circle cx="317" cy="143" r="2.2" fill="#b0b0b0" stroke="#000" stroke-width="0.8"/><circle cx="364" cy="143" r="2.2" fill="#c0b080" stroke="#000" stroke-width="0.8"/><circle cx="411" cy="132" r="2.2" fill="#40a040" stroke="#000" stroke-width="0.8"/><circle cx="411" cy="144" r="2.2" fill="#000" stroke="#000" stroke-width="0.8"/><circle cx="462" cy="144" r="2.2" fill="#a0e060" stroke="#000" stroke-width="0.8"/><circle cx="554" cy="45" r="2.2" fill="#40d040" stroke="#000" stroke-width="0.8"/><circle cx="510" cy="144" r="2.2" fill="#80a080" stroke="#000" stroke-width="0.8"/><circle cx="555" cy="145" r="2.2" fill="#a0a0a0" stroke="#000" stroke-width="0.8"/><circle cx="603" cy="144" r="2.2" fill="#40d040" stroke="#000" stroke-width="0.8"/><circle cx="621" cy="137" r="2.2" fill="#60b040" stroke="#000" stroke-width="0.8"/><circle cx="651" cy="133" r="2.2" fill="#60c040" stroke="#000" stroke-width="0.8"/><circle cx="651" cy="145" r="2.2" fill="#60c040" stroke="#000" stroke-width="0.8"/><path d="M541,253 Q558,241 593,241 Q630,242 645,254 Q630,266 593,266 Q558,266 541,253 Z" fill="#28b8f6" stroke="#000" stroke-width="2.2"/><clipPath id="hc"><rect x="560" y="233" width="46.5" height="41" rx="16" ry="18"/></clipPath><g clip-path="url(#hc)"><rect x="560" y="233" width="47" height="41" fill="#20a8f0"/><path d="M564.0,233 Q561.1,253 564.0,274" fill="none" stroke="#000" stroke-width="0.8"/><path d="M569.6,233 Q567.6,253 569.6,274" fill="none" stroke="#000" stroke-width="0.8"/><path d="M575.2,233 Q574.0,253 575.2,274" fill="none" stroke="#000" stroke-width="0.8"/><path d="M580.8,233 Q580.5,253 580.8,274" fill="none" stroke="#000" stroke-width="0.8"/><path d="M586.4,233 Q586.9,253 586.4,274" fill="none" stroke="#000" stroke-width="0.8"/><path d="M592.0,233 Q593.4,253 592.0,274" fill="none" stroke="#000" stroke-width="0.8"/><path d="M597.6,233 Q599.8,253 597.6,274" fill="none" stroke="#000" stroke-width="0.8"/><path d="M603.2,233 Q606.2,253 603.2,274" fill="none" stroke="#000" stroke-width="0.8"/><path d="M560,237.0 Q583,235.0 606,237.0" fill="none" stroke="#000" stroke-width="0.8"/><path d="M560,241.7 Q583,239.7 606,241.7" fill="none" stroke="#000" stroke-width="0.8"/><path d="M560,246.4 Q583,244.4 606,246.4" fill="none" stroke="#000" stroke-width="0.8"/><path d="M560,251.1 Q583,249.1 606,251.1" fill="none" stroke="#000" stroke-width="0.8"/><path d="M560,255.8 Q583,253.8 606,255.8" fill="none" stroke="#000" stroke-width="0.8"/><path d="M560,260.5 Q583,258.5 606,260.5" fill="none" stroke="#000" stroke-width="0.8"/><path d="M560,265.2 Q583,263.2 606,265.2" fill="none" stroke="#000" stroke-width="0.8"/><path d="M560,269.9 Q583,267.9 606,269.9" fill="none" stroke="#000" stroke-width="0.8"/><rect x="565" y="257" width="38" height="13" rx="6.5" fill="#48d0f8" stroke="#000" stroke-width="1.2"/><path d="M566,261 L602,261 M566,265 L602,265" stroke="#000" stroke-width="0.8"/><path d="M568,262 Q572,268 580,268" stroke="#c0f8ff" stroke-width="2" fill="none"/></g><rect x="559" y="232" width="48.5" height="43" rx="17" ry="19" fill="none" stroke="#000" stroke-width="3"/><path d="M610,248 L620,248 L620,252 L626,253 L626,256 L620,256 L620,260 L610,260 Z" fill="#22e61e" stroke="#000" stroke-width="0.8"/><path d="M613,250 L613,258 M616,250 L618,258" stroke="#000" stroke-width="0.7"/><circle cx="632.5" cy="254" r="5.5" fill="#22e61e" stroke="#000" stroke-width="0.8"/><path d="M632.5,248.5 L632.5,259.5" stroke="#000" stroke-width="0.7"/><line x1="530" y1="254.5" x2="663" y2="254.5" stroke="#1a60e0" stroke-width="1.2"/><rect x="543" y="251" width="8" height="5" fill="#c0c8d0"/><line x1="448.4" y1="14" x2="448.4" y2="81" stroke="#20d020" stroke-width="1.3"/><line x1="448.4" y1="81" x2="448.4" y2="316" stroke="#1a60e0" stroke-width="1.3"/><line x1="491.8" y1="278" x2="491.8" y2="350" stroke="#20d020" stroke-width="1.2"/><line x1="579.4" y1="485" x2="574.4" y2="548" stroke="#20d020" stroke-width="1.2"/><line x1="578.8" y1="493" x2="577.5" y2="510" stroke="#1a60e0" stroke-width="1.2"/><line x1="649.6" y1="455.6" x2="724.3" y2="445" stroke="#20d020" stroke-width="1.2"/><line x1="665" y1="452" x2="700" y2="447" stroke="#20d020" stroke-width="1.2"/><line x1="627" y1="204" x2="686" y2="193.5" stroke="#20d020" stroke-width="0.9"/><path d="M669,197 l3,-3 l3,3 l3,-3 l3,3 l3,-3 l3,2" stroke="#20d020" stroke-width="1.2" fill="none"/><line x1="138.8" y1="94.4" x2="209.8" y2="94.4" stroke="#f4f4f4" stroke-width="1.3"/><line x1="209.8" y1="94.4" x2="231" y2="94.4" stroke="#20d020" stroke-width="1.3"/><line x1="208" y1="130.5" x2="218" y2="130.5" stroke="#f4f4f4" stroke-width="1.3"/><line x1="218" y1="130.5" x2="228" y2="130.5" stroke="#20d020" stroke-width="1.3"/><line x1="205" y1="198.5" x2="268" y2="198.5" stroke="#20d020" stroke-width="1.1"/><line x1="212" y1="197" x2="226" y2="197" stroke="#20d020" stroke-width="1.6"/><path d="M216.5,101.5 L229,101.5 L229,122.5 L216.5,122.5 L212.5,116.0 L212.5,108.0 Z" fill="#f4f2e4" stroke="#000" stroke-width="1.6"/><line x1="217.5" y1="104.0" x2="229" y2="104.0" stroke="#000" stroke-width="1"/><line x1="217.5" y1="120.0" x2="229" y2="120.0" stroke="#000" stroke-width="1"/><circle cx="217.5" cy="112.0" r="2.2" fill="none" stroke="#222" stroke-width="1"/><path d="M215.5,255.5 L228,255.5 L228,277.5 L215.5,277.5 L211.5,270.5 L211.5,262.5 Z" fill="#f4f2e4" stroke="#000" stroke-width="1.6"/><line x1="216.5" y1="258.0" x2="228" y2="258.0" stroke="#000" stroke-width="1"/><line x1="216.5" y1="275.0" x2="228" y2="275.0" stroke="#000" stroke-width="1"/><circle cx="216.5" cy="266.5" r="2.2" fill="none" stroke="#222" stroke-width="1"/><line x1="204" y1="113" x2="268" y2="113" stroke="#20d020" stroke-width="1.1"/><line x1="199" y1="268" x2="270" y2="268" stroke="#20d020" stroke-width="1.1"/><line x1="673" y1="245.6" x2="725.4" y2="245.6" stroke="#f4f4f4" stroke-width="1.1"/><line x1="678.7" y1="281.7" x2="728" y2="281.7" stroke="#f4f4f4" stroke-width="1.1"/><line x1="686" y1="240" x2="686" y2="281" stroke="#f4f4f4" stroke-width="1"/><g transform="translate(0,0)"><path d="M686.5,104 L686.5,112 Q686.5,116 682,116 L677,116 Q673.5,116 673.5,120 L673.5,127 Q673.5,131 677,131 L684.5,131 Q688,131 688,135 L688,144" fill="none" stroke="#000" stroke-width="3.6"/><path d="M686.5,104 L686.5,112 Q686.5,116 682,116 L677,116 Q673.5,116 673.5,120 L673.5,127 Q673.5,131 677,131 L684.5,131 Q688,131 688,135 L688,144" fill="none" stroke="#ecece0" stroke-width="1.6"/><path d="M678.5,119 L678.5,129" stroke="#e8e070" stroke-width="1"/><path d="M676,116 L676,131" stroke="#000" stroke-width="0.8"/><path d="M683,101 L689,100 L689,108 L683,108 Z" fill="#111"/><rect x="688" y="104" width="7" height="3" fill="#f0f0f0" stroke="#000" stroke-width="0.8"/><rect x="695" y="103" width="2" height="5" fill="#000"/><path d="M684,140 L690,140 L690,147 L685,147 Z" fill="#111"/><rect x="690" y="141" width="6" height="3" fill="#f0f0f0" stroke="#000" stroke-width="0.8"/><rect x="696" y="140" width="2" height="5" fill="#000"/><line x1="677" y1="106" x2="683" y2="106" stroke="#f4f4f4" stroke-width="1"/><line x1="697" y1="105.5" x2="699" y2="105.5" stroke="#f4f4f4" stroke-width="1"/><rect x="676" y="111" width="7" height="3" fill="#f4f4f4"/><rect x="679" y="134" width="7" height="3" fill="#000"/><line x1="680" y1="137" x2="680" y2="142" stroke="#f4f4f4" stroke-width="1"/></g><g transform="translate(8,141)"><path d="M686.5,104 L686.5,112 Q686.5,116 682,116 L677,116 Q673.5,116 673.5,120 L673.5,127 Q673.5,131 677,131 L684.5,131 Q688,131 688,135 L688,144" fill="none" stroke="#000" stroke-width="3.6"/><path d="M686.5,104 L686.5,112 Q686.5,116 682,116 L677,116 Q673.5,116 673.5,120 L673.5,127 Q673.5,131 677,131 L684.5,131 Q688,131 688,135 L688,144" fill="none" stroke="#ecece0" stroke-width="1.6"/><path d="M678.5,119 L678.5,129" stroke="#e8e070" stroke-width="1"/><path d="M676,116 L676,131" stroke="#000" stroke-width="0.8"/><path d="M683,101 L689,100 L689,108 L683,108 Z" fill="#111"/><rect x="688" y="104" width="7" height="3" fill="#f0f0f0" stroke="#000" stroke-width="0.8"/><rect x="695" y="103" width="2" height="5" fill="#000"/><path d="M684,140 L690,140 L690,147 L685,147 Z" fill="#111"/><rect x="690" y="141" width="6" height="3" fill="#f0f0f0" stroke="#000" stroke-width="0.8"/><rect x="696" y="140" width="2" height="5" fill="#000"/><line x1="677" y1="106" x2="683" y2="106" stroke="#f4f4f4" stroke-width="1"/><line x1="697" y1="105.5" x2="699" y2="105.5" stroke="#f4f4f4" stroke-width="1"/><rect x="676" y="111" width="7" height="3" fill="#f4f4f4"/><rect x="679" y="134" width="7" height="3" fill="#000"/><line x1="680" y1="137" x2="680" y2="142" stroke="#f4f4f4" stroke-width="1"/></g><path d="M63,498 L63,526 A28,28 0 0 0 91,498 Z" fill="#9a9ea6"/><path d="M63,498 L63,514 A16,16 0 0 0 79,498 Z" fill="#5e6470"/><rect x="63" y="495.2" width="30" height="5.7" fill="#ee1010"/><path d="M93,492.7 L100.5,498 L93,503.4 Z" fill="#d00808"/><rect x="59.8" y="498" width="6.4" height="33" fill="#2a3ce8"/><rect x="62" y="500" width="2" height="30" fill="#a0a8f8"/><path d="M57,530 L69,530 L63,536 Z" fill="#101070"/><circle cx="63" cy="498.2" r="6.1" fill="#10e010"/><path d="M104,487.5 L110.5,499 M110.5,487.5 L104,499" stroke="#f01010" stroke-width="1.4" fill="none"/><path d="M60.5,537.5 L65.5,537.5 L60.5,542 L66,542" stroke="#1010f0" stroke-width="1.1" fill="none"/><path d="M60.5,487 L63,490 L65.5,487 M63,490 L63,492" stroke="#10d010" stroke-width="1.1" fill="none"/><path d="M331,316.5 L335,317 L336,321 L333,323 Z" fill="#22e61e" stroke="#000" stroke-width="0.7"/><path d="M648,321 L655,320 L657,326 L652,331 L649,327 Z" fill="#22e61e" stroke="#000" stroke-width="0.8"/><path d="M266,122 l2,-1 l2,1 l2,-1 l2,1 l2,-1 l2,1" fill="none" stroke="#20d020" stroke-width="1"/><path d="M266,136 l2,-1 l2,1 l2,-1 l2,1 l2,-1 l2,1" fill="none" stroke="#20d020" stroke-width="1"/><path d="M597,115 l2,-1 l2,1 l2,-1 l2,1 l2,-1 l2,1" fill="none" stroke="#20d020" stroke-width="1"/><path d="M597,129.5 l2,-1 l2,1 l2,-1 l2,1 l2,-1 l2,1" fill="none" stroke="#20d020" stroke-width="1"/><path d="M669.7,280 L672,303 M672.3,280 L675,303" stroke="#20c020" stroke-width="0.8"/><path d="M676,325 L700,500 M679,325 L703,500" stroke="#20c020" stroke-width="0.6" opacity="0.7"/></svg>
</body></html>
